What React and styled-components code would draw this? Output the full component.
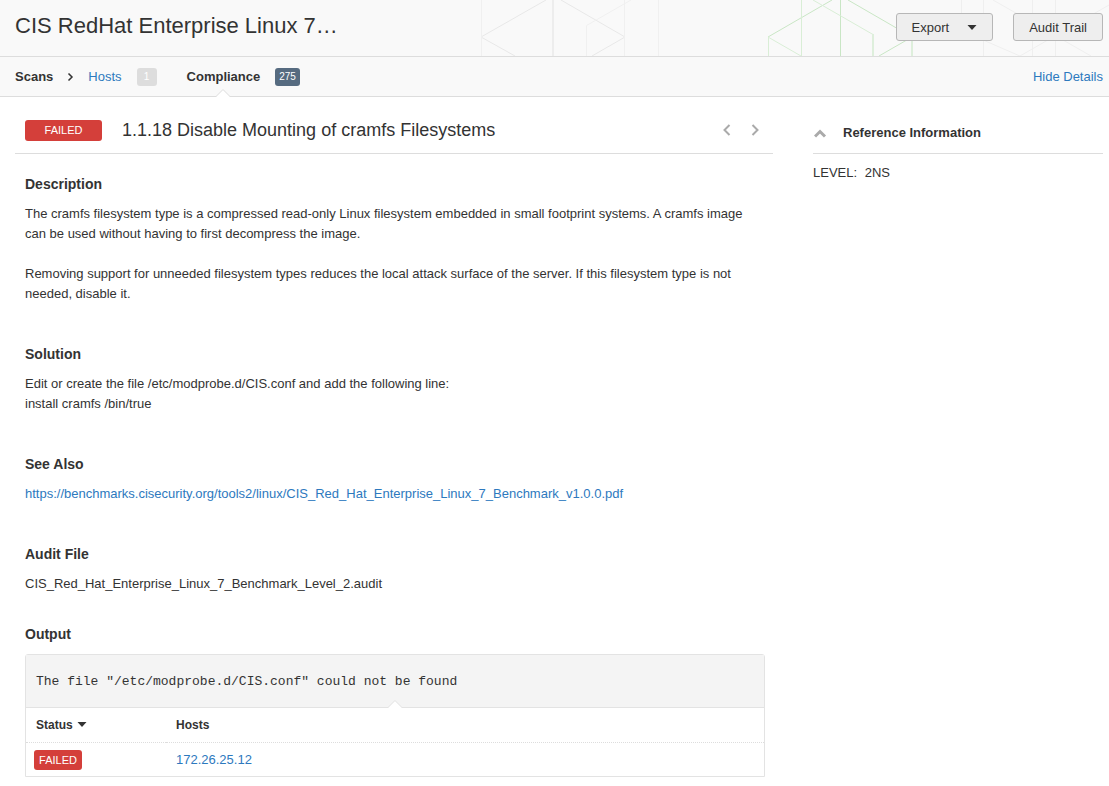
import * as React from "react";
import styled, { createGlobalStyle } from "styled-components";

const GlobalStyle = createGlobalStyle`
  * {
    box-sizing: border-box;
  }
  body {
    margin: 0;
    background: #ffffff;
    color: #333333;
    font-family: "Liberation Sans", Arial, Helvetica, sans-serif;
    font-size: 13px;
    line-height: 20px;
  }
  h1, h2, h3, h4, p, pre {
    margin: 0;
  }
  button {
    font-family: inherit;
    color: inherit;
    cursor: pointer;
  }
`;

const Link = styled.a`
  color: #2d79be;
  text-decoration: none;
  &:hover {
    text-decoration: underline;
  }
`;

const Header = styled.header`
  position: relative;
  display: flex;
  justify-content: space-between;
  gap: 20px;
  padding: 13px 6px 15px 15px;
  overflow: hidden;
  background: #f9f9f9;
  border-bottom: 1px solid #dddddd;
`;

const Pattern = styled.svg`
  position: absolute;
  top: 0;
  right: 0;
  fill: none;
`;

const ScanName = styled.h1`
  position: relative;
  font-size: 22px;
  font-weight: normal;
  line-height: 26px;
  white-space: nowrap;
`;

const Actions = styled.div`
  position: relative;
  display: flex;
  gap: 20px;
`;

const Button = styled.button`
  display: flex;
  align-items: center;
  gap: 18px;
  height: 28px;
  padding: 0 15px;
  font-size: 13px;
  white-space: nowrap;
  background: #eeeeee;
  border: 1px solid #b7b7b7;
  border-radius: 3px;
`;

const NavBar = styled.nav`
  display: flex;
  align-items: center;
  height: 40px;
  padding: 0 6px 0 15px;
  background: #f9f9f9;
  border-bottom: 1px solid #dddddd;
`;

const Crumb = styled.span`
  font-weight: bold;
`;

const CrumbArrow = styled.svg`
  margin: 0 14px;
`;

const Tab = styled.div`
  position: relative;
  display: flex;
  align-items: center;
  align-self: stretch;
  font-weight: ${(props) => (props.$active ? "bold" : "normal")};
`;

const Nub = styled.svg`
  position: absolute;
  left: 50%;
  bottom: -1px;
  margin-left: -7px;
`;

const Count = styled.span`
  min-width: 20px;
  height: 18px;
  padding: 0 4px;
  margin: 0 30px 0 15px;
  font-size: 10px;
  line-height: 18px;
  text-align: center;
  color: #ffffff;
  border-radius: 3px;
  background: ${(props) => (props.$active ? "#566b80" : "#dddddd")};
`;

const DetailsToggle = styled(Link)`
  margin-left: auto;
`;

const Content = styled.div`
  display: flex;
  align-items: flex-start;
  gap: 40px;
  padding: 0 6px 9px 15px;
`;

const Main = styled.main`
  flex: 1;
  min-width: 0;
`;

const Sidebar = styled.aside`
  flex: 0 0 290px;
`;

const TitleBar = styled.div`
  display: flex;
  align-items: center;
  height: 57px;
  padding: 10px 10px 0;
  border-bottom: 1px solid #dddddd;
`;

const Badge = styled.span`
  display: inline-block;
  min-width: ${(props) => (props.$wide ? "77px" : "48px")};
  height: ${(props) => (props.$wide ? "21px" : "20px")};
  font-size: 11px;
  line-height: 20px;
  text-align: center;
  vertical-align: middle;
  color: #ffffff;
  background: #d43f3a;
  border-radius: 3px;
`;

const PluginName = styled.h2`
  flex: 1;
  margin-left: 20px;
  font-size: 18px;
  font-weight: normal;
  line-height: 20px;
`;

const Pager = styled.div`
  display: flex;
  gap: 12px;
`;

const IconButton = styled.button`
  display: flex;
  align-items: center;
  justify-content: center;
  width: 16px;
  height: 20px;
  padding: 0;
  border: 0;
  background: none;
`;

const Sections = styled.div`
  padding: 20px 8px 0 10px;
`;

const Section = styled.section`
  margin-bottom: ${(props) => (props.$tight ? "30px" : "40px")};
  &:last-child {
    margin-bottom: 0;
  }
`;

const SectionTitle = styled.h3`
  margin-bottom: 10px;
  font-size: 14px;
  line-height: 20px;
`;

const Paragraph = styled.p`
  & + & {
    margin-top: 20px;
  }
`;

const OutputBox = styled.div`
  border: 1px solid #e3e3e3;
  border-radius: 3px 3px 0 0;
`;

const OutputText = styled.div`
  position: relative;
  padding: 17px 10px 15px;
  background: #f4f4f4;
  border-bottom: 1px solid #e3e3e3;
  pre {
    font-family: "Liberation Mono", "Courier New", monospace;
    font-size: 13px;
    line-height: 20px;
    white-space: pre-wrap;
  }
`;

const HostTable = styled.table`
  width: 100%;
  border-collapse: collapse;
  table-layout: fixed;
  th,
  td {
    height: 34px;
    padding: 0 10px;
    text-align: left;
  }
  th {
    font-size: 12px;
    border-bottom: 1px dotted #dddddd;
  }
  th:first-child {
    width: 140px;
  }
  td:first-child {
    padding-left: 8px;
  }
  td:last-child {
    padding-top: 2px;
  }
`;

const SortArrow = styled.svg`
  margin-left: 4px;
  vertical-align: 2px;
`;

const SidebarTitle = styled.div`
  display: flex;
  align-items: center;
  gap: 14px;
  height: 57px;
  padding-top: 15px;
  border-bottom: 1px solid #dddddd;
  h3 {
    font-size: 13px;
  }
`;

const Reference = styled.p`
  margin-top: 9px;
  span {
    margin-left: 4px;
  }
`;

const Chevron = ({ d, width = 10, height = 14, color = "#aaaaaa", stroke = 2 }) => (
  <svg width={width} height={height} fill="none" aria-hidden="true">
    <path d={d} stroke={color} strokeWidth={stroke} />
  </svg>
);

const HeaderPattern = () => (
  <Pattern width="649" height="56" aria-hidden="true">
    <g stroke="#e8e8e8">
      <path d="M86 0L21 37L55 56M101 0L165 37L132 56" />
      <path d="M93 0V56" stroke="#ededed" strokeWidth="2" />
      <path d="M21.500 0V56M164.500 0V56M126.500 56V25.500L171 0M198.500 0V56" stroke="#f0f0f0" />
    </g>
    <g stroke="#c9e6c5">
      <path d="M372 0L308 37M388 0L452 37L419 56" />
      <path d="M380.500 0V56" />
      <path d="M308.500 37V56M308 37L341 56M341.500 0V56M353 0L413 34.500" stroke="#d9eed6" />
      <path d="M413 34V56M452 37V56" stroke="#deefdc" strokeWidth="2" />
    </g>
    <g stroke="#efefef">
      <path d="M501.500 0V13M523.500 0V56M572.500 0V56M595.500 0V56" />
      <path d="M533 0L631 56M523 40L560 56L649 5" />
    </g>
  </Pattern>
);

const NubArrow = ({ color }) => (
  <Nub width="14" height="8" aria-hidden="true">
    <path d="M0 8L7 1L14 8Z" fill="#ffffff" />
    <path d="M0 7.500L7 0.500L14 7.500" fill="none" stroke={color} />
  </Nub>
);

const App = () => {
  return (
    <>
      <GlobalStyle />
      <Header>
        <HeaderPattern />
        <ScanName>CIS RedHat Enterprise Linux 7…</ScanName>
        <Actions>
          <Button type="button">
            Export
            <svg width="10" height="5" aria-hidden="true">
              <path d="M0.500 0H9.500L5 5Z" fill="#333333" />
            </svg>
          </Button>
          <Button type="button">Audit Trail</Button>
        </Actions>
      </Header>
      <NavBar>
        <Crumb>Scans</Crumb>
        <CrumbArrow width="7" height="10" fill="none" aria-hidden="true">
          <path d="M1.500 1.500L5 5L1.500 8.500" stroke="#333333" strokeWidth="1.500" />
        </CrumbArrow>
        <Tab>
          <Link href="#hosts">Hosts</Link>
        </Tab>
        <Count>1</Count>
        <Tab $active>
          Compliance
          <NubArrow color="#dddddd" />
        </Tab>
        <Count $active>275</Count>
        <DetailsToggle href="#details">Hide Details</DetailsToggle>
      </NavBar>
      <Content>
        <Main>
          <TitleBar>
            <Badge $wide>FAILED</Badge>
            <PluginName>1.1.18 Disable Mounting of cramfs Filesystems</PluginName>
            <Pager>
              <IconButton type="button" aria-label="Previous">
                <Chevron d="M7.500 2L2.500 7L7.500 12" />
              </IconButton>
              <IconButton type="button" aria-label="Next">
                <Chevron d="M2.500 2L7.500 7L2.500 12" />
              </IconButton>
            </Pager>
          </TitleBar>
          <Sections>
            <Section>
              <SectionTitle>Description</SectionTitle>
              <Paragraph>
                The cramfs filesystem type is a compressed read-only Linux
                filesystem embedded in small footprint systems. A cramfs image
                can be used without having to first decompress the image.
              </Paragraph>
              <Paragraph>
                Removing support for unneeded filesystem types reduces the local
                attack surface of the server. If this filesystem type is not
                needed, disable it.
              </Paragraph>
            </Section>
            <Section>
              <SectionTitle>Solution</SectionTitle>
              <Paragraph>
                Edit or create the file /etc/modprobe.d/CIS.conf and add the
                following line:
                <br />
                install cramfs /bin/true
              </Paragraph>
            </Section>
            <Section>
              <SectionTitle>See Also</SectionTitle>
              <Paragraph>
                <Link href="https://benchmarks.cisecurity.org/tools2/linux/CIS_Red_Hat_Enterprise_Linux_7_Benchmark_v1.0.0.pdf">
                  https://benchmarks.cisecurity.org/tools2/linux/CIS_Red_Hat_Enterprise_Linux_7_Benchmark_v1.0.0.pdf
                </Link>
              </Paragraph>
            </Section>
            <Section $tight>
              <SectionTitle>Audit File</SectionTitle>
              <Paragraph>
                CIS_Red_Hat_Enterprise_Linux_7_Benchmark_Level_2.audit
              </Paragraph>
            </Section>
            <Section>
              <SectionTitle>Output</SectionTitle>
              <OutputBox>
                <OutputText>
                  <pre>
                    {'The file "/etc/modprobe.d/CIS.conf" could not be found'}
                  </pre>
                  <NubArrow color="#e3e3e3" />
                </OutputText>
                <HostTable>
                  <thead>
                    <tr>
                      <th>
                        Status
                        <SortArrow width="10" height="5" aria-hidden="true">
                          <path d="M0.500 0H9.500L5 5Z" fill="#333333" />
                        </SortArrow>
                      </th>
                      <th>Hosts</th>
                    </tr>
                  </thead>
                  <tbody>
                    <tr>
                      <td>
                        <Badge>FAILED</Badge>
                      </td>
                      <td>
                        <Link href="#172.26.25.12">172.26.25.12</Link>
                      </td>
                    </tr>
                  </tbody>
                </HostTable>
              </OutputBox>
            </Section>
          </Sections>
        </Main>
        <Sidebar>
          <SidebarTitle>
            <IconButton type="button" aria-label="Collapse">
              <Chevron
                d="M1 8.500L6 3.500L11 8.500"
                width={14}
                height={10}
                stroke={3}
              />
            </IconButton>
            <h3>Reference Information</h3>
          </SidebarTitle>
          <Reference>
            LEVEL: <span>2NS</span>
          </Reference>
        </Sidebar>
      </Content>
    </>
  );
};

export default App;
